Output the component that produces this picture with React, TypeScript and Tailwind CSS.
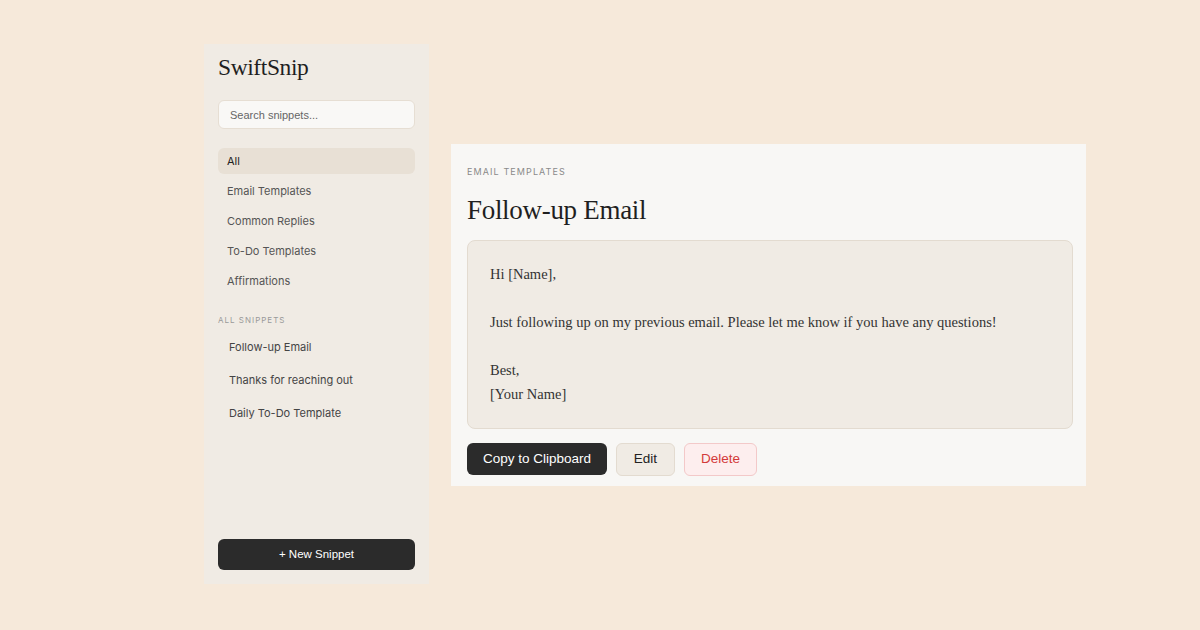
import { useState } from 'react'

const categories = ['All', 'Email Templates', 'Common Replies', 'To-Do Templates', 'Affirmations']
const snippets = ['Follow-up Email', 'Thanks for reaching out', 'Daily To-Do Template']

const body = `Hi [Name],

Just following up on my previous email. Please let me know if you have any questions!

Best,
[Your Name]`

export default function App() {
  const [active] = useState('All')

  return (
    <div className="w-[1200px] h-[630px] bg-[#f6e9da] flex items-start pl-[204px] pt-[44px] gap-[22px] overflow-hidden">
      {/* Sidebar */}
      <aside className="w-[225px] h-[540px] bg-[#f0ebe4] flex flex-col px-[14px] pt-[10px] pb-[14px] font-['Inter',sans-serif]">
        <h1 className="font-['Liberation_Serif',serif] text-[23.5px] leading-[26px] mt-0 text-[#1f1f1f] tracking-[-0.4px]">
          SwiftSnip
        </h1>

        <input
          placeholder="Search snippets..."
          className="mt-[20px] h-[29px] w-full rounded-md border border-[#e6ded3] bg-[#f9f8f6] px-[11px] text-[11px] text-[#555] placeholder:text-[#666] font-['Liberation_Sans',sans-serif] outline-none"
        />

        {/* Categories */}
        <nav className="mt-[19px] flex flex-col gap-[4px]">
          {categories.map((c) => (
            <div
              key={c}
              className={`h-[26px] rounded-md px-[9px] flex items-center text-[11px] ${
                c === active ? 'bg-[#e8e0d5] text-[#222]' : 'text-[#555]'
              }`}
            >
              {c}
            </div>
          ))}
        </nav>

        <div className="mt-[20px] text-[8px] tracking-[1px] text-[#999] uppercase">All Snippets</div>

        <div className="mt-[8px] flex flex-col gap-[7px]">
          {snippets.map((s) => (
            <div key={s} className="h-[26px] px-[11px] flex items-center text-[11px] text-[#444]">
              {s}
            </div>
          ))}
        </div>

        <button className="mt-auto h-[31px] w-full rounded-md bg-[#2b2b2b] text-white text-[11.5px] font-['Liberation_Sans',sans-serif]">
          + New Snippet
        </button>
      </aside>

      {/* Main panel */}
      <main className="mt-[100px] w-[635px] bg-[#f8f7f5] pl-[16px] pr-[13px] pt-[22px] pb-[10px] font-['Inter',sans-serif]">
        <div className="text-[9px] tracking-[1.1px] text-[#8a8a8a] uppercase leading-[12px]">Email Templates</div>
        <h2 className="mt-[17px] font-['Liberation_Serif',serif] text-[27px] leading-[30px] text-[#1f1f1f] tracking-[-0.3px]">
          Follow-up Email
        </h2>

        <div className="mt-[15px] rounded-lg border border-[#e3dbd0] bg-[#f0ebe4] px-[22px] pt-[21px] pb-[22px]">
          <p className="whitespace-pre-wrap font-['Liberation_Serif',serif] text-[14.5px] leading-[24px] text-[#333]">
            {body}
          </p>
        </div>

        <div className="mt-[14px] flex gap-[9px] font-['Liberation_Sans',sans-serif] text-[13.5px]">
          <button className="h-[32px] w-[140px] rounded-md bg-[#2b2b2b] text-white">Copy to Clipboard</button>
          <button className="h-[33px] w-[59px] rounded-md bg-[#f0ebe4] border border-[#e3dbd0] text-[#222]">Edit</button>
          <button className="h-[33px] w-[73px] rounded-md bg-[#fdeeee] border border-[#f3c9c9] text-[#d33a3a]">Delete</button>
        </div>
      </main>
    </div>
  )
}
